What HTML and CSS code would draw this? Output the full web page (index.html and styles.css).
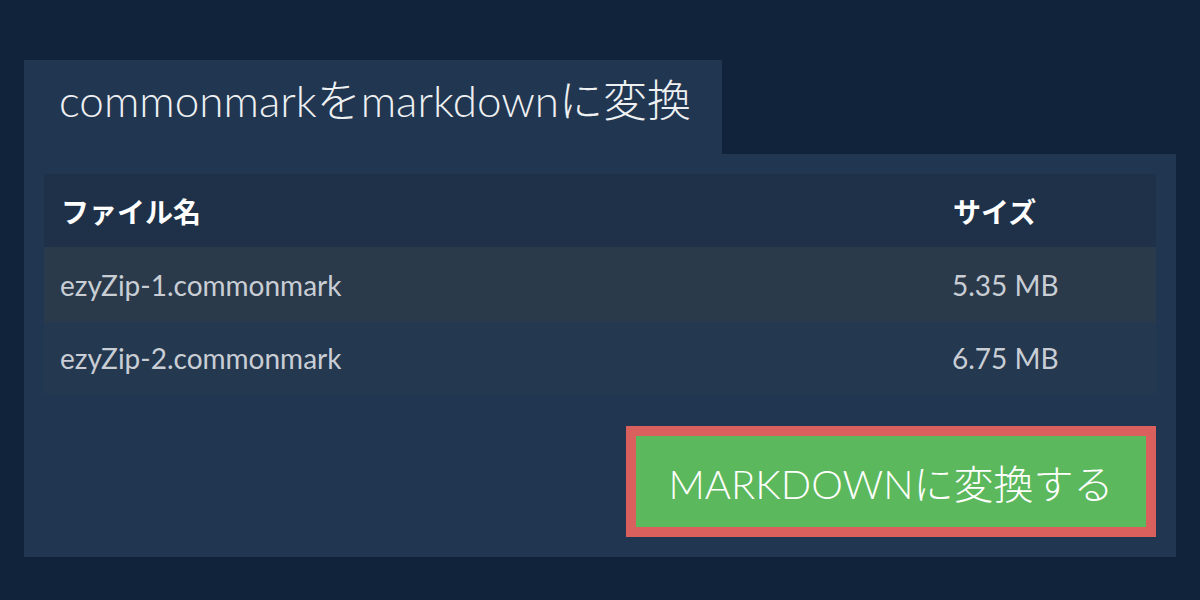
FILE: index.html
```html
<!DOCTYPE html>
<html lang="ja">
<head>
<meta charset="utf-8">
<link rel="stylesheet" href="styles.css">
</head>
<body>
<div class="wrap">
  <div class="tab"><h1 class="title">commonmarkをmarkdownに変換</h1></div>
  <div class="panel">
    <table class="files">
      <thead>
        <tr><th class="c-name">ファイル名</th><th class="c-size">サイズ</th></tr>
      </thead>
      <tbody>
        <tr class="r1"><td>ezyZip-1.commonmark</td><td>5.35 MB</td></tr>
        <tr class="r2"><td>ezyZip-2.commonmark</td><td>6.75 MB</td></tr>
      </tbody>
    </table>
    <div class="actions">
      <button class="convert">MARKDOWNに変換する</button>
    </div>
  </div>
</div>
</body>
</html>
```

FILE: styles.css
```css
html, body {
  margin: 0;
  padding: 0;
  background: #10233a;
}
body {
  width: 1200px;
  height: 600px;
  overflow: hidden;
  font-family: Lato, "Noto Sans CJK JP", sans-serif;
}
.wrap {
  padding: 60px 24px 0 24px;
}
.tab {
  width: 698px;
  height: 94px;
  background: #213650;
  display: flex;
  align-items: center;
}
.title {
  margin: 0 0 0 35px;
  font-size: 44px;
  font-weight: 300;
  color: #eef0f2;
  line-height: 1;
  position: relative;
  top: -7px;
}
.panel {
  background: #213650;
  padding: 20px 20px 20px 20px;
}
.files {
  width: 100%;
  border-collapse: collapse;
  font-size: 28px;
}
.files th {
  text-align: left;
  font-weight: 700;
  color: #ffffff;
  height: 73px;
  padding: 0 17px;
  background: #1e3148;
  font-size: 28px;
}
.files .c-size {
  width: 186px;
}
.files td {
  padding: 0 16px;
  color: #c9ced5;
}
.r1 td { height: 75px; }
.r2 td { height: 72px; }
.r1 { background: #2b3a4b; }
.r2 { background: #243850; }
.actions {
  display: flex;
  justify-content: flex-end;
  margin-top: 32px;
}
.convert {
  width: 530px;
  height: 111px;
  border: 10px solid #d9605c;
  background: #5cb85c;
  color: #ffffff;
  font-family: Lato, "Noto Sans CJK JP", sans-serif;
  font-weight: 300;
  font-size: 40px;
  padding: 0;
  box-sizing: border-box;
}
```
